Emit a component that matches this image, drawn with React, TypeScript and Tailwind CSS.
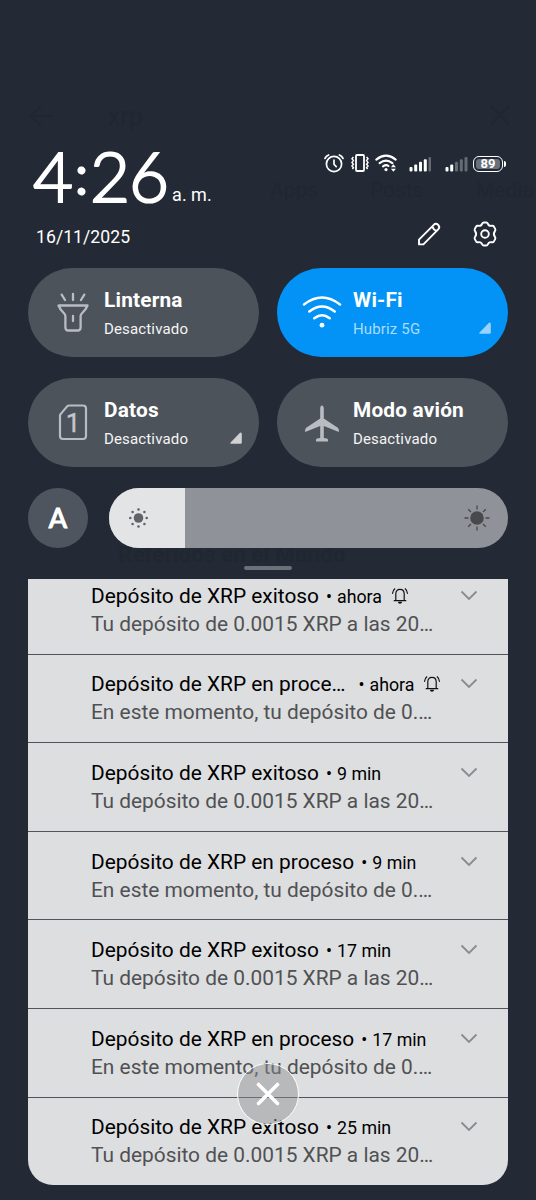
import type { ReactNode } from "react";

const notifications = [
  { title: "Depósito de XRP exitoso", text: "Tu depósito de 0.0015 XRP a las 20…", time: "ahora", bell: true },
  { title: "Depósito de XRP en proce…", text: "En este momento, tu depósito de 0.…", time: "ahora", bell: true, gap: true },
  { title: "Depósito de XRP exitoso", text: "Tu depósito de 0.0015 XRP a las 20…", time: "9 min" },
  { title: "Depósito de XRP en proceso", text: "En este momento, tu depósito de 0.…", time: "9 min" },
  { title: "Depósito de XRP exitoso", text: "Tu depósito de 0.0015 XRP a las 20…", time: "17 min" },
  { title: "Depósito de XRP en proceso", text: "En este momento, tu depósito de 0.…", time: "17 min" },
  { title: "Depósito de XRP exitoso", text: "Tu depósito de 0.0015 XRP a las 20…", time: "25 min" },
];

function StatusIcons() {
  return (
    <div className="flex items-center text-white">
      <svg width="20" height="20" viewBox="0 0 20 20" fill="none" stroke="currentColor" strokeWidth="1.7" strokeLinecap="round">
        <circle cx="10" cy="11" r="7.6" />
        <path d="M10 7.2V11.2L12.2 13.6M1 5.4Q2 3 4.6 2M19 5.4Q18 3 15.4 2" />
      </svg>
      <svg className="ml-[6px]" width="20" height="20" viewBox="0 0 20 20" fill="none" stroke="currentColor" strokeWidth="1.5">
        <rect x="6" y="2" width="8" height="16" rx="1" strokeWidth="1.8" />
        <path d="M3.4 4L2 5.8L3.4 7.6L2 9.4L3.4 11.2L2 13L3.4 14.8L2.4 16M16.6 4L18 5.8L16.6 7.6L18 9.4L16.6 11.2L18 13L16.6 14.8L17.6 16" />
      </svg>
      <svg className="ml-[5px]" width="22" height="20" viewBox="0 0 22 20" fill="none" stroke="currentColor" strokeWidth="2.1" strokeLinecap="round">
        <path d="M1.3 6.6Q11 -1.2 20.7 6.6M4.6 10.2Q11 5.2 17.4 10.2M8 13.4Q11 11.2 13.5 13" />
        <circle cx="11" cy="16.6" r="1.6" fill="currentColor" stroke="none" />
        <path d="M18.4 11.2L20.9 14.2H15.9ZM18.4 18.8L15.9 15.8H20.9Z" fill="currentColor" stroke="none" />
      </svg>
      <svg className="mt-px ml-[12px]" width="23" height="16" viewBox="0 0 23 16" fill="currentColor">
        <rect x="0.5" y="11" width="3" height="4.5" rx="1" />
        <rect x="5.2" y="8.4" width="3" height="7.1" rx="1" />
        <rect x="10" y="5.8" width="3" height="9.7" rx="1" />
        <rect x="14.8" y="3.2" width="3" height="12.3" rx="1" />
        <rect x="19.5" y="1" width="2.5" height="14.5" rx="1" opacity="0.3" />
      </svg>
      <svg className="mt-px ml-[13px]" width="24" height="16" viewBox="0 0 24 16" fill="currentColor">
        <rect x="0.5" y="11" width="3" height="4.5" rx="1" />
        <rect x="5.2" y="8.4" width="3" height="7.1" rx="1" />
        <g opacity="0.3">
          <rect x="10" y="5.8" width="3" height="9.7" rx="1" />
          <rect x="14.8" y="3.2" width="3" height="12.3" rx="1" />
          <rect x="19.5" y="1" width="3" height="14.5" rx="1" />
        </g>
      </svg>
      <div className="mt-px ml-[4px] h-4 w-[30px] rounded-[6px] border-[1.8px] border-white p-[2px]">
        <div className="flex h-full items-center justify-center rounded-[3px] bg-[#687079] text-[13px] leading-none font-bold">89</div>
      </div>
      <div className="mt-px ml-px h-1.5 w-[2px] rounded-r bg-white" />
    </div>
  );
}

function FlashlightIcon() {
  return (
    <svg className="-mt-[3px]" width="40" height="44" viewBox="0 0 40 44" fill="none" stroke="#b9bcc1" strokeWidth="2.3" strokeLinecap="round" strokeLinejoin="round">
      <path d="M5.5 16.5H34.5Q33 20.5 28.8 24.5Q27.6 25.7 27.6 27.3V38.5Q27.6 41.5 24.6 41.5H15.4Q12.4 41.5 12.4 38.5V27.3Q12.4 25.7 11.2 24.5Q7 20.5 5.5 16.5ZM20 27V32M20 5V11M8.7 5.6L12 11M31.3 5.6L28 11" />
    </svg>
  );
}

function WifiIcon() {
  return (
    <svg className="-mt-[3px]" width="40" height="44" viewBox="0 0 40 44" fill="none" stroke="#fff" strokeWidth="2.5" strokeLinecap="round">
      <path d="M2 15.5Q20 1.5 38 15.5M7.3 22.5Q20 12.5 32.7 22.5M12.3 29.3Q20 23.3 27.7 29.3" />
      <circle cx="20" cy="36.2" r="2.4" fill="#fff" stroke="none" />
    </svg>
  );
}

function SimIcon() {
  return (
    <div className="-mt-px grid h-11 w-10 place-items-center">
      <svg className="col-start-1 row-start-1" width="40" height="44" viewBox="0 0 40 44" fill="none" stroke="#b9bcc1" strokeWidth="2.2" strokeLinejoin="round">
        <path d="M16.2 5.5H30Q33 5.5 33 8.5V36Q33 39 30 39H10Q7 39 7 36V15.8Q7 14.7 7.8 13.9L14.1 6.4Q15 5.5 16.2 5.5Z" />
      </svg>
      <span className="col-start-1 row-start-1 pt-[2px] text-[26px] leading-none text-[#c3c6ca] [-webkit-text-stroke:0.4px_#c3c6ca]">1</span>
    </div>
  );
}

function PlaneIcon() {
  return (
    <svg width="40" height="44" viewBox="0 0 40 44" fill="#b9bcc1">
      <path d="M20 4.5C21.3 4.5 21.8 6 21.8 7.5V17.6L35.8 26.8Q37.4 28 36.9 31L21.8 25V36.9L25 37.6Q26.6 38.2 26 40.5H14Q13.4 38.2 15 37.6L18.2 36.9V25L3.1 31Q2.6 28 4.2 26.8L18.2 17.6V7.5C18.2 6 18.7 4.5 20 4.5Z" />
    </svg>
  );
}

type TileProps = { icon: ReactNode; title: string; state: string; active?: boolean; arrow?: boolean };

function Tile({ icon, title, state, active, arrow }: TileProps) {
  return (
    <div className={`flex h-[89px] items-center rounded-full pr-[17px] pl-[25px] ${active ? "bg-[#0393f6]" : "bg-[#8d9297]/40"}`}>
      {icon}
      <div className="ml-[11px] flex-1 pt-[2px]">
        <div className="text-[20.8px] leading-6 font-bold tracking-[0.2px] text-white">{title}</div>
        <div className={`mt-[7px] text-[15px] leading-5 tracking-[0.15px] ${active ? "text-[#a9dcff]" : "text-[#f4f5f6]"}`}>{state}</div>
      </div>
      {arrow && (
        <svg className="mt-[31px]" width="12" height="12" viewBox="0 0 12 12">
          <path d="M10 .8Q11.8 -.3 11.8 2V10.6Q11.8 11.8 10.6 11.8H1.2Q-.3 11.6 .8 10.2Z" fill={active ? "#9ad3ff" : "#cfd1d3"} />
        </svg>
      )}
    </div>
  );
}

function Bell() {
  return (
    <svg className="ml-[9px]" width="18" height="18" viewBox="0 0 18 18" fill="none" stroke="#111" strokeWidth="1.2" strokeLinecap="round" strokeLinejoin="round">
      <path d="M3.2 13.7H14.8M4.8 13.5V7Q4.8 2.4 9 2.4T13.2 7V13.5M3.8 1.8Q1.8 3.5 1.6 6.3M14.2 1.8Q16.2 3.5 16.4 6.3" />
      <path d="M7.6 15.3Q9 16.9 10.4 15.3Z" fill="#111" />
    </svg>
  );
}

export default function App() {
  return (
    <div className="relative isolate h-[1200px] w-[536px] overflow-hidden bg-[#232a35] font-['Roboto',sans-serif]">
      {/* dimmed app behind the shade */}
      <div className="absolute inset-0 -z-10 text-[#202731]" aria-hidden="true">
        <svg className="absolute top-[104px] left-[29px]" width="26" height="24" viewBox="0 0 26 24" fill="none" stroke="currentColor" strokeWidth="2">
          <path d="M12 2L2 12L12 22M2 12H24" />
        </svg>
        <span className="absolute top-[101px] left-[108px] text-[25px] leading-8">xrp</span>
        <svg className="absolute top-[105px] left-[490px]" width="20" height="20" viewBox="0 0 20 20" stroke="currentColor" strokeWidth="2">
          <path d="M1 1L19 19M19 1L1 19" />
        </svg>
        <span className="absolute top-[178px] left-[270px] text-[21px] leading-6">Apps</span>
        <span className="absolute top-[178px] left-[370px] text-[21px] leading-6">Posts</span>
        <span className="absolute top-[178px] left-[476px] text-[21px] leading-6">Media</span>
        <span className="absolute top-[542px] left-[118px] text-[22.5px] leading-6 font-bold whitespace-nowrap">Referidos en el Mundo</span>
      </div>

      <div className="flex h-[211px] justify-between pt-[145px] pr-[30px] pl-[33px]">
        <div className="flex items-end text-white">
          <div className="flex h-[66px] items-start font-['Lato',sans-serif] text-[69px] leading-[62px] font-light [-webkit-text-stroke:2.2px_white]">
            <span>4</span>
            <span className="w-[17px] text-center text-[54px] leading-[58px] [-webkit-text-stroke:3px_white]">:</span>
            <span>2</span>
            <span className="-ml-px">6</span>
          </div>
          <span className="pb-[5px] pl-[3px] text-[18px] leading-[22px]">a. m.</span>
        </div>
        <div className="h-[37px] pt-[8px]">
          <StatusIcons />
        </div>
      </div>

      <div className="flex h-[57px] items-start justify-between pt-[9px] pr-[38px] pl-[36px] text-white">
        <span className="pt-[6px] text-[17.6px] leading-[22px] tracking-[0.05px]">16/11/2025</span>
        <div className="flex gap-[30px]">
          <svg width="26" height="28" viewBox="0 0 26 28" fill="none" stroke="currentColor" strokeWidth="1.9" strokeLinejoin="round">
            <path d="M3 24.4V19.6L17.8 4.8Q20 2.8 22.2 5Q24.4 7.2 22.2 9.4L7.4 24.4ZM16.4 6.4Q17.4 9.8 20.6 10.8" />
          </svg>
          <svg width="26" height="28" viewBox="0 0 26 28" fill="none" stroke="currentColor" strokeWidth="1.9" strokeLinejoin="round">
            <path d="M10.2 3.6Q10.7 2.5 11.8 2.5H14.2Q15.3 2.5 15.8 3.6Q16.8 6.4 19.8 5.8Q21.2 5.5 21.9 6.6L23.2 8.9Q23.8 10 22.9 11.1Q20.8 14 22.9 16.9Q23.8 18 23.2 19.1L21.9 21.4Q21.2 22.5 19.8 22.2Q16.8 21.6 15.8 24.4Q15.3 25.5 14.2 25.5H11.8Q10.7 25.5 10.2 24.4Q9.2 21.6 6.2 22.2Q4.8 22.5 4.1 21.4L2.8 19.1Q2.2 18 3.1 16.9Q5.2 14 3.1 11.1Q2.2 10 2.8 8.9L4.1 6.6Q4.8 5.5 6.2 5.8Q9.2 6.4 10.2 3.6Z" />
            <circle cx="13" cy="14" r="3.8" />
          </svg>
        </div>
      </div>

      <div className="grid grid-cols-2 gap-x-[18px] gap-y-[21px] px-7">
        <Tile icon={<FlashlightIcon />} title="Linterna" state="Desactivado" />
        <Tile icon={<WifiIcon />} title="Wi-Fi" state="Hubriz 5G" active arrow />
        <Tile icon={<SimIcon />} title="Datos" state="Desactivado" arrow />
        <Tile icon={<PlaneIcon />} title="Modo avión" state="Desactivado" />
      </div>

      <div className="mt-[21px] flex gap-[21px] px-7">
        <div className="flex size-[60px] items-center justify-center rounded-full bg-[#4e555e] font-['Lato',sans-serif] text-[27px] text-white [-webkit-text-stroke:1.2px_white]">A</div>
        <div className="flex h-[60px] flex-1 overflow-hidden rounded-full bg-[#909299]">
          <div className="flex w-[76px] items-center bg-[#e3e4e6] pl-5">
            <svg width="20" height="20" viewBox="0 0 20 20" fill="#626366">
              <circle cx="9.5" cy="10" r="4.8" />
              <circle cx="9.5" cy="1.5" r="1.3" />
              <circle cx="9.5" cy="18.5" r="1.3" />
              <circle cx="1.3" cy="10" r="1.3" />
              <circle cx="17.7" cy="10" r="1.3" />
              <circle cx="3.6" cy="4" r="1.3" />
              <circle cx="15.4" cy="4" r="1.3" />
              <circle cx="3.6" cy="16" r="1.3" />
              <circle cx="15.4" cy="16" r="1.3" />
            </svg>
          </div>
          <div className="flex flex-1 items-center justify-end pr-[18.5px]">
            <svg width="26" height="26" viewBox="0 0 26 26" stroke="#48494c" strokeWidth="1.3">
              <circle cx="13" cy="13" r="6.8" fill="#48494c" stroke="none" />
              <path d="M13 .5V4.5M13 21.5V25.5M.5 13H4.5M21.5 13H25.5M4.2 4.2L7 7M19 19L21.8 21.8M4.2 21.8L7 19M19 7L21.8 4.2" />
            </svg>
          </div>
        </div>
      </div>

      <div className="flex h-[31px] justify-center pt-[18px]">
        <div className="h-[4px] w-[48px] rounded-full bg-[#6b7179]" />
      </div>

      <div className="mx-7 h-[606px] overflow-hidden rounded-b-[25px] bg-[#dddee0]">
        <div className="-mt-[14px]">
          {notifications.map((item, i) => (
            <div key={i} className={`flex h-[88.6px] justify-between pr-[30px] pl-[63px] ${i > 0 ? "border-t border-[#50555b] pt-[15.9px]" : "pt-[17px]"}`}>
              <div>
                <div className="flex items-center text-black">
                  <span className="text-[20.88px] leading-[28px] whitespace-nowrap">{item.title}</span>
                  <span className={`flex gap-[5px] pt-px text-[17.8px] leading-[27px] whitespace-nowrap ${item.gap ? "ml-[13px]" : "ml-[7px]"}`}>
                    <span>•</span>
                    <span>{item.time}</span>
                  </span>
                  {item.bell && <Bell />}
                </div>
                <div className="text-[20.88px] leading-[28px] whitespace-nowrap text-[#505153]">{item.text}</div>
              </div>
              <svg className="mt-[8px]" width="18" height="12" viewBox="0 0 18 12" fill="none" stroke="#8a8b8e" strokeWidth="1.8">
                <path d="M1.5 1.5L9 9L16.5 1.5" />
              </svg>
            </div>
          ))}
        </div>
      </div>

      <button className="absolute top-[1063px] left-[237px] flex size-[62px] items-center justify-center rounded-full border-[1.5px] border-white bg-[#8b8c8e]/45" aria-label="Cerrar">
        <svg width="24" height="24" viewBox="0 0 24 24" stroke="#fff" strokeWidth="3.6" strokeLinecap="round">
          <path d="M2.5 2.5L21.5 21.5M21.5 2.5L2.5 21.5" />
        </svg>
      </button>
    </div>
  );
}
